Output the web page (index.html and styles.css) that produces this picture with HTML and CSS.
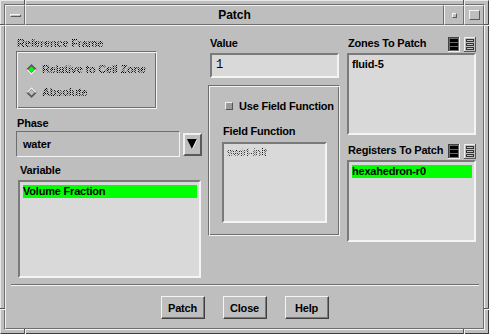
FILE: index.html
```html
<!DOCTYPE html>
<html>
<head>
<meta charset="utf-8">
<title>Patch</title>
<link rel="stylesheet" href="styles.css">
</head>
<body>
<div class="win">
  <span class="mark mv m-tl-v"></span>
  <span class="mark mh m-tl-h"></span>
  <span class="mark mv m-tr-v"></span>
  <span class="mark mh m-tr-h"></span>
  <span class="mark mv m-bl-v"></span>
  <span class="mark mh m-bl-h"></span>
  <span class="mark mv m-br-v"></span>
  <span class="mark mh m-br-h"></span>
  <div class="inner">
    <div class="titlebar">
      <div class="tb-btn"><span class="menu-bar"></span></div>
      <div class="tb-title">Patch</div>
      <div class="tb-btn"><span class="min-box"></span></div>
      <div class="tb-btn"><span class="max-box"></span></div>
    </div>
    <div class="content">
      <div class="main">
        <div class="col1">
          <div class="label rf-label"><span class="stip">Reference Frame</span></div>
          <div class="frame">
            <div class="radio-row">
              <svg class="diamond" width="11" height="11" viewBox="0 0 11 11">
                <polygon points="5.5,0 11,5.5 5.5,11 0,5.5" fill="#5a5a5a"/>
                <polygon points="11,5.5 5.5,11 0,5.5 2,5.5 5.5,9 9,5.5" fill="#f2f2f2"/>
                <polygon points="5.5,2.5 8.5,5.5 5.5,8.5 2.5,5.5" fill="#00ff00"/>
              </svg>
              <span class="stip">Relative to Cell Zone</span>
            </div>
            <div class="radio-row">
              <svg class="diamond" width="11" height="11" viewBox="0 0 11 11">
                <polygon points="5.5,0 11,5.5 5.5,11 0,5.5" fill="#5a5a5a"/>
                <polygon points="5.5,0 11,5.5 9,5.5 5.5,2 2,5.5 0,5.5" fill="#f2f2f2"/>
                <polygon points="5.5,2.5 8.5,5.5 5.5,8.5 2.5,5.5" fill="#bebebe"/>
              </svg>
              <span class="stip">Absolute</span>
            </div>
          </div>
          <div class="label phase-label">Phase</div>
          <div class="drop-row">
            <div class="drop-field">water</div>
            <div class="drop-btn">
              <svg width="11" height="11" viewBox="0 0 11 11">
                <polygon points="0,0 10,0 5,10" fill="#000"/>
                <path d="M10 0.5 L5.5 10" stroke="#e6e6e6" stroke-width="1" fill="none"/>
              </svg>
            </div>
          </div>
          <div class="label var-label">Variable</div>
          <div class="list var-list"><div class="item sel">Volume Fraction</div></div>
        </div>
        <div class="col2">
          <div class="label value-label">Value</div>
          <div class="text-field">1</div>
          <div class="group">
            <div class="check-row"><span class="check"></span><span>Use Field Function</span></div>
            <div class="label ff-label">Field Function</div>
            <div class="list ff-list"><div class="item plain"><span class="stip">swirl-init</span></div></div>
          </div>
        </div>
        <div class="col3">
          <div class="list-head">
            <span class="label head-label">Zones To Patch</span>
            <svg class="licon" width="12" height="15" viewBox="0 0 12 15">
              <rect width="12" height="15" fill="#6a6a6a"/>
              <path d="M0 0H12V1H1V15H0Z" fill="#444"/>
              <path d="M12 0V15H0V14H11V0Z" fill="#f0f0f0"/>
              <rect x="2" y="2" width="8" height="3" fill="#000"/>
              <rect x="2" y="6" width="8" height="3" fill="#000"/>
              <rect x="2" y="10" width="8" height="3" fill="#000"/>
            </svg>
            <svg class="licon licon2" width="12" height="15" viewBox="0 0 12 15">
              <rect width="12" height="15" fill="#bebebe"/>
              <path d="M0 0H12V1H1V15H0Z" fill="#f0f0f0"/>
              <path d="M12 0V15H0V14H11V0Z" fill="#555"/>
              <rect x="2.5" y="2.5" width="7" height="2" fill="none" stroke="#333" stroke-width="1"/>
              <rect x="2.5" y="6.5" width="7" height="2" fill="none" stroke="#333" stroke-width="1"/>
              <rect x="2.5" y="10.5" width="7" height="2" fill="none" stroke="#333" stroke-width="1"/>
            </svg>
          </div>
          <div class="list zone-list"><div class="item plain">fluid-5</div></div>
          <div class="list-head reg-head">
            <span class="label head-label">Registers To Patch</span>
            <svg class="licon" width="12" height="15" viewBox="0 0 12 15">
              <rect width="12" height="15" fill="#6a6a6a"/>
              <path d="M0 0H12V1H1V15H0Z" fill="#444"/>
              <path d="M12 0V15H0V14H11V0Z" fill="#f0f0f0"/>
              <rect x="2" y="2" width="8" height="3" fill="#000"/>
              <rect x="2" y="6" width="8" height="3" fill="#000"/>
              <rect x="2" y="10" width="8" height="3" fill="#000"/>
            </svg>
            <svg class="licon licon2" width="12" height="15" viewBox="0 0 12 15">
              <rect width="12" height="15" fill="#bebebe"/>
              <path d="M0 0H12V1H1V15H0Z" fill="#f0f0f0"/>
              <path d="M12 0V15H0V14H11V0Z" fill="#555"/>
              <rect x="2.5" y="2.5" width="7" height="2" fill="none" stroke="#333" stroke-width="1"/>
              <rect x="2.5" y="6.5" width="7" height="2" fill="none" stroke="#333" stroke-width="1"/>
              <rect x="2.5" y="10.5" width="7" height="2" fill="none" stroke="#333" stroke-width="1"/>
            </svg>
          </div>
          <div class="list reg-list"><div class="item sel">hexahedron-r0</div></div>
        </div>
      </div>
      <div class="sep"></div>
      <div class="buttons">
        <div class="btn">Patch</div>
        <div class="btn">Close</div>
        <div class="btn">Help</div>
      </div>
    </div>
  </div>
</div>
</body>
</html>
```
FILE: styles.css
```css
html, body {
  margin: 0;
  padding: 0;
  background: #bebebe;
}
body {
  font-family: "Liberation Sans", Arial, sans-serif;
  font-size: 11px;
  font-weight: bold;
  letter-spacing: -0.2px;
  color: #000;
}
.win {
  position: relative;
  width: 489px;
  height: 334px;
  box-sizing: border-box;
  border: 1px solid;
  border-color: #e8e8e8 #3c3c3c #3c3c3c #e8e8e8;
  padding: 3px;
  background: #bebebe;
}
.mark {
  position: absolute;
  background: #555;
}
.mv { width: 1px; height: 5px; box-shadow: 1px 0 #f0f0f0; }
.mh { width: 5px; height: 1px; box-shadow: 0 1px #f0f0f0; }
.m-tl-v { left: 23px; top: -1px; }
.m-tl-h { left: -1px; top: 23px; }
.m-tr-v { left: 462px; top: -1px; }
.m-tr-h { left: 483px; top: 23px; }
.m-bl-v { left: 23px; top: 328px; }
.m-bl-h { left: -1px; top: 307px; }
.m-br-v { left: 462px; top: 328px; }
.m-br-h { left: 483px; top: 307px; }

.inner {
  height: 100%;
  box-sizing: border-box;
  border: 1px solid;
  border-color: #6e6e6e #f4f4f4 #f4f4f4 #6e6e6e;
  display: flex;
  flex-direction: column;
}
.titlebar {
  height: 20px;
  display: flex;
}
.tb-btn {
  width: 20px;
  box-sizing: border-box;
  border: 1px solid;
  border-color: #f0f0f0 #6e6e6e #6e6e6e #f0f0f0;
  display: flex;
  align-items: center;
  justify-content: center;
}
.tb-title {
  flex: 1;
  box-sizing: border-box;
  border: 1px solid;
  border-color: #f0f0f0 #6e6e6e #6e6e6e #f0f0f0;
  text-align: center;
  font-size: 12px;
  letter-spacing: 0;
  line-height: 18px;
}
.menu-bar {
  width: 11px;
  height: 3px;
  box-sizing: border-box;
  border: 1px solid;
  border-color: #f4f4f4 #5a5a5a #5a5a5a #f4f4f4;
}
.min-box {
  width: 5px;
  height: 5px;
  box-sizing: border-box;
  border: 1px solid;
  border-color: #f4f4f4 #5a5a5a #5a5a5a #f4f4f4;
}
.max-box {
  width: 11px;
  height: 10px;
  box-sizing: border-box;
  border: 1px solid;
  border-color: #f4f4f4 #5a5a5a #5a5a5a #f4f4f4;
}
.content {
  flex: 1;
  box-sizing: border-box;
  border: 1px solid;
  border-color: #f0f0f0 #6e6e6e #6e6e6e #f0f0f0;
  padding: 10px 0 9px 0;
  display: flex;
  flex-direction: column;
}
.main {
  display: flex;
  height: 242px;
  margin-left: 10px;
}
.col1 { width: 186px; }
.col2 { width: 132px; margin-left: 6px; }
.col3 { width: 129px; margin-left: 7px; }

.label {
  display: block;
  height: 14px;
  line-height: 14px;
  white-space: nowrap;
}
.stip {
  color: transparent;
  background-image: repeating-conic-gradient(#000 0 25%, transparent 0 50%);
  background-size: 2px 2px;
  -webkit-background-clip: text;
  background-clip: text;
}
.rf-label { padding-left: 1px; }
.frame {
  margin-top: 1px;
  width: 141px;
  height: 58px;
  box-sizing: border-box;
  border: 1px solid;
  border-color: #6e6e6e #f4f4f4 #f4f4f4 #6e6e6e;
  box-shadow: inset 1px 1px #f4f4f4, inset -1px -1px #6e6e6e;
  padding: 10px 0 0 9px;
}
.radio-row {
  display: flex;
  align-items: center;
  height: 14px;
  line-height: 14px;
  white-space: nowrap;
}
.radio-row + .radio-row { margin-top: 9px; }
.diamond { margin-right: 5px; flex: none; }

.phase-label { margin-top: 7px; padding-left: 1px; }
.drop-row {
  margin-top: 1px;
  height: 26px;
  display: flex;
  align-items: center;
}
.drop-field {
  width: 164px;
  height: 26px;
  box-sizing: border-box;
  border: 1px solid;
  border-color: #6e6e6e #f4f4f4 #f4f4f4 #6e6e6e;
  padding-left: 6px;
  line-height: 24px;
}
.drop-btn {
  margin-left: 3px;
  width: 19px;
  height: 23px;
  box-sizing: border-box;
  border: 2px solid;
  border-color: #f0f0f0 #5a5a5a #5a5a5a #f0f0f0;
  display: flex;
  align-items: center;
  justify-content: center;
}
.var-label { margin-top: 6px; padding-left: 4px; }
.list {
  box-sizing: border-box;
  background: #d9d9d9;
  border: 2px solid;
  border-color: #7a7a7a #f4f4f4 #f4f4f4 #7a7a7a;
}
.var-list {
  margin-top: 3px;
  margin-left: 2px;
  width: 183px;
  height: 98px;
  padding: 3px 2px 0 3px;
}
.item {
  height: 13px;
  line-height: 13px;
  white-space: nowrap;
}
.item.plain { height: 14px; line-height: 14px; }
.sel { background: #00ff00; }

.value-label { padding-left: 2px; }
.text-field {
  margin-top: 3px;
  margin-left: 2px;
  width: 129px;
  height: 25px;
  box-sizing: border-box;
  background: #d9d9d9;
  border: 2px solid;
  border-color: #7a7a7a #f4f4f4 #f4f4f4 #7a7a7a;
  padding-left: 4px;
  font-family: "Liberation Mono", "Courier New", monospace;
  font-weight: normal;
  font-size: 12px;
  letter-spacing: 0;
  line-height: 21px;
}
.group {
  margin-top: 7px;
  width: 132px;
  height: 151px;
  box-sizing: border-box;
  border: 1px solid;
  border-color: #6e6e6e #f4f4f4 #f4f4f4 #6e6e6e;
  box-shadow: inset 1px 1px #f4f4f4, inset -1px -1px #6e6e6e;
  padding: 13px 0 0 13px;
}
.check-row {
  display: flex;
  align-items: center;
  height: 14px;
  line-height: 14px;
  margin-left: 3px;
  white-space: nowrap;
}
.check {
  width: 8px;
  height: 8px;
  box-sizing: border-box;
  border: 1px solid;
  border-color: #f0f0f0 #555 #555 #f0f0f0;
  background: #9a9a9a;
  margin-right: 6px;
  flex: none;
}
.ff-label { margin-top: 11px; padding-left: 1px; }
.ff-list {
  margin-top: 4px;
  width: 105px;
  height: 81px;
  padding: 1px 3px 0 3px;
  font-weight: normal;
  letter-spacing: 0;
}

.list-head {
  display: flex;
  height: 16px;
}
.head-label { flex: 1; padding-left: 1px; }
.licon { margin-top: 1px; flex: none; }
.licon2 { margin-left: 4px; }
.zone-list {
  margin-top: 1px;
  width: 129px;
  height: 82px;
  padding: 2px 3px 0 3px;
}
.reg-head { margin-top: 8px; }
.reg-list {
  margin-top: 1px;
  width: 129px;
  height: 82px;
  padding: 3px 2px 0 3px;
}

.sep {
  margin: 6px 4px 0 5px;
  height: 2px;
  box-sizing: border-box;
  border-top: 1px solid #6e6e6e;
  border-bottom: 1px solid #f4f4f4;
}
.buttons {
  margin-top: 10px;
  display: flex;
  justify-content: center;
  gap: 18px;
}
.btn {
  width: 44px;
  height: 23px;
  box-sizing: border-box;
  border: 1px solid;
  border-color: #f4f4f4 #404040 #404040 #f4f4f4;
  box-shadow: inset -1px -1px #7a7a7a;
  display: flex;
  align-items: center;
  justify-content: center;
}
```
